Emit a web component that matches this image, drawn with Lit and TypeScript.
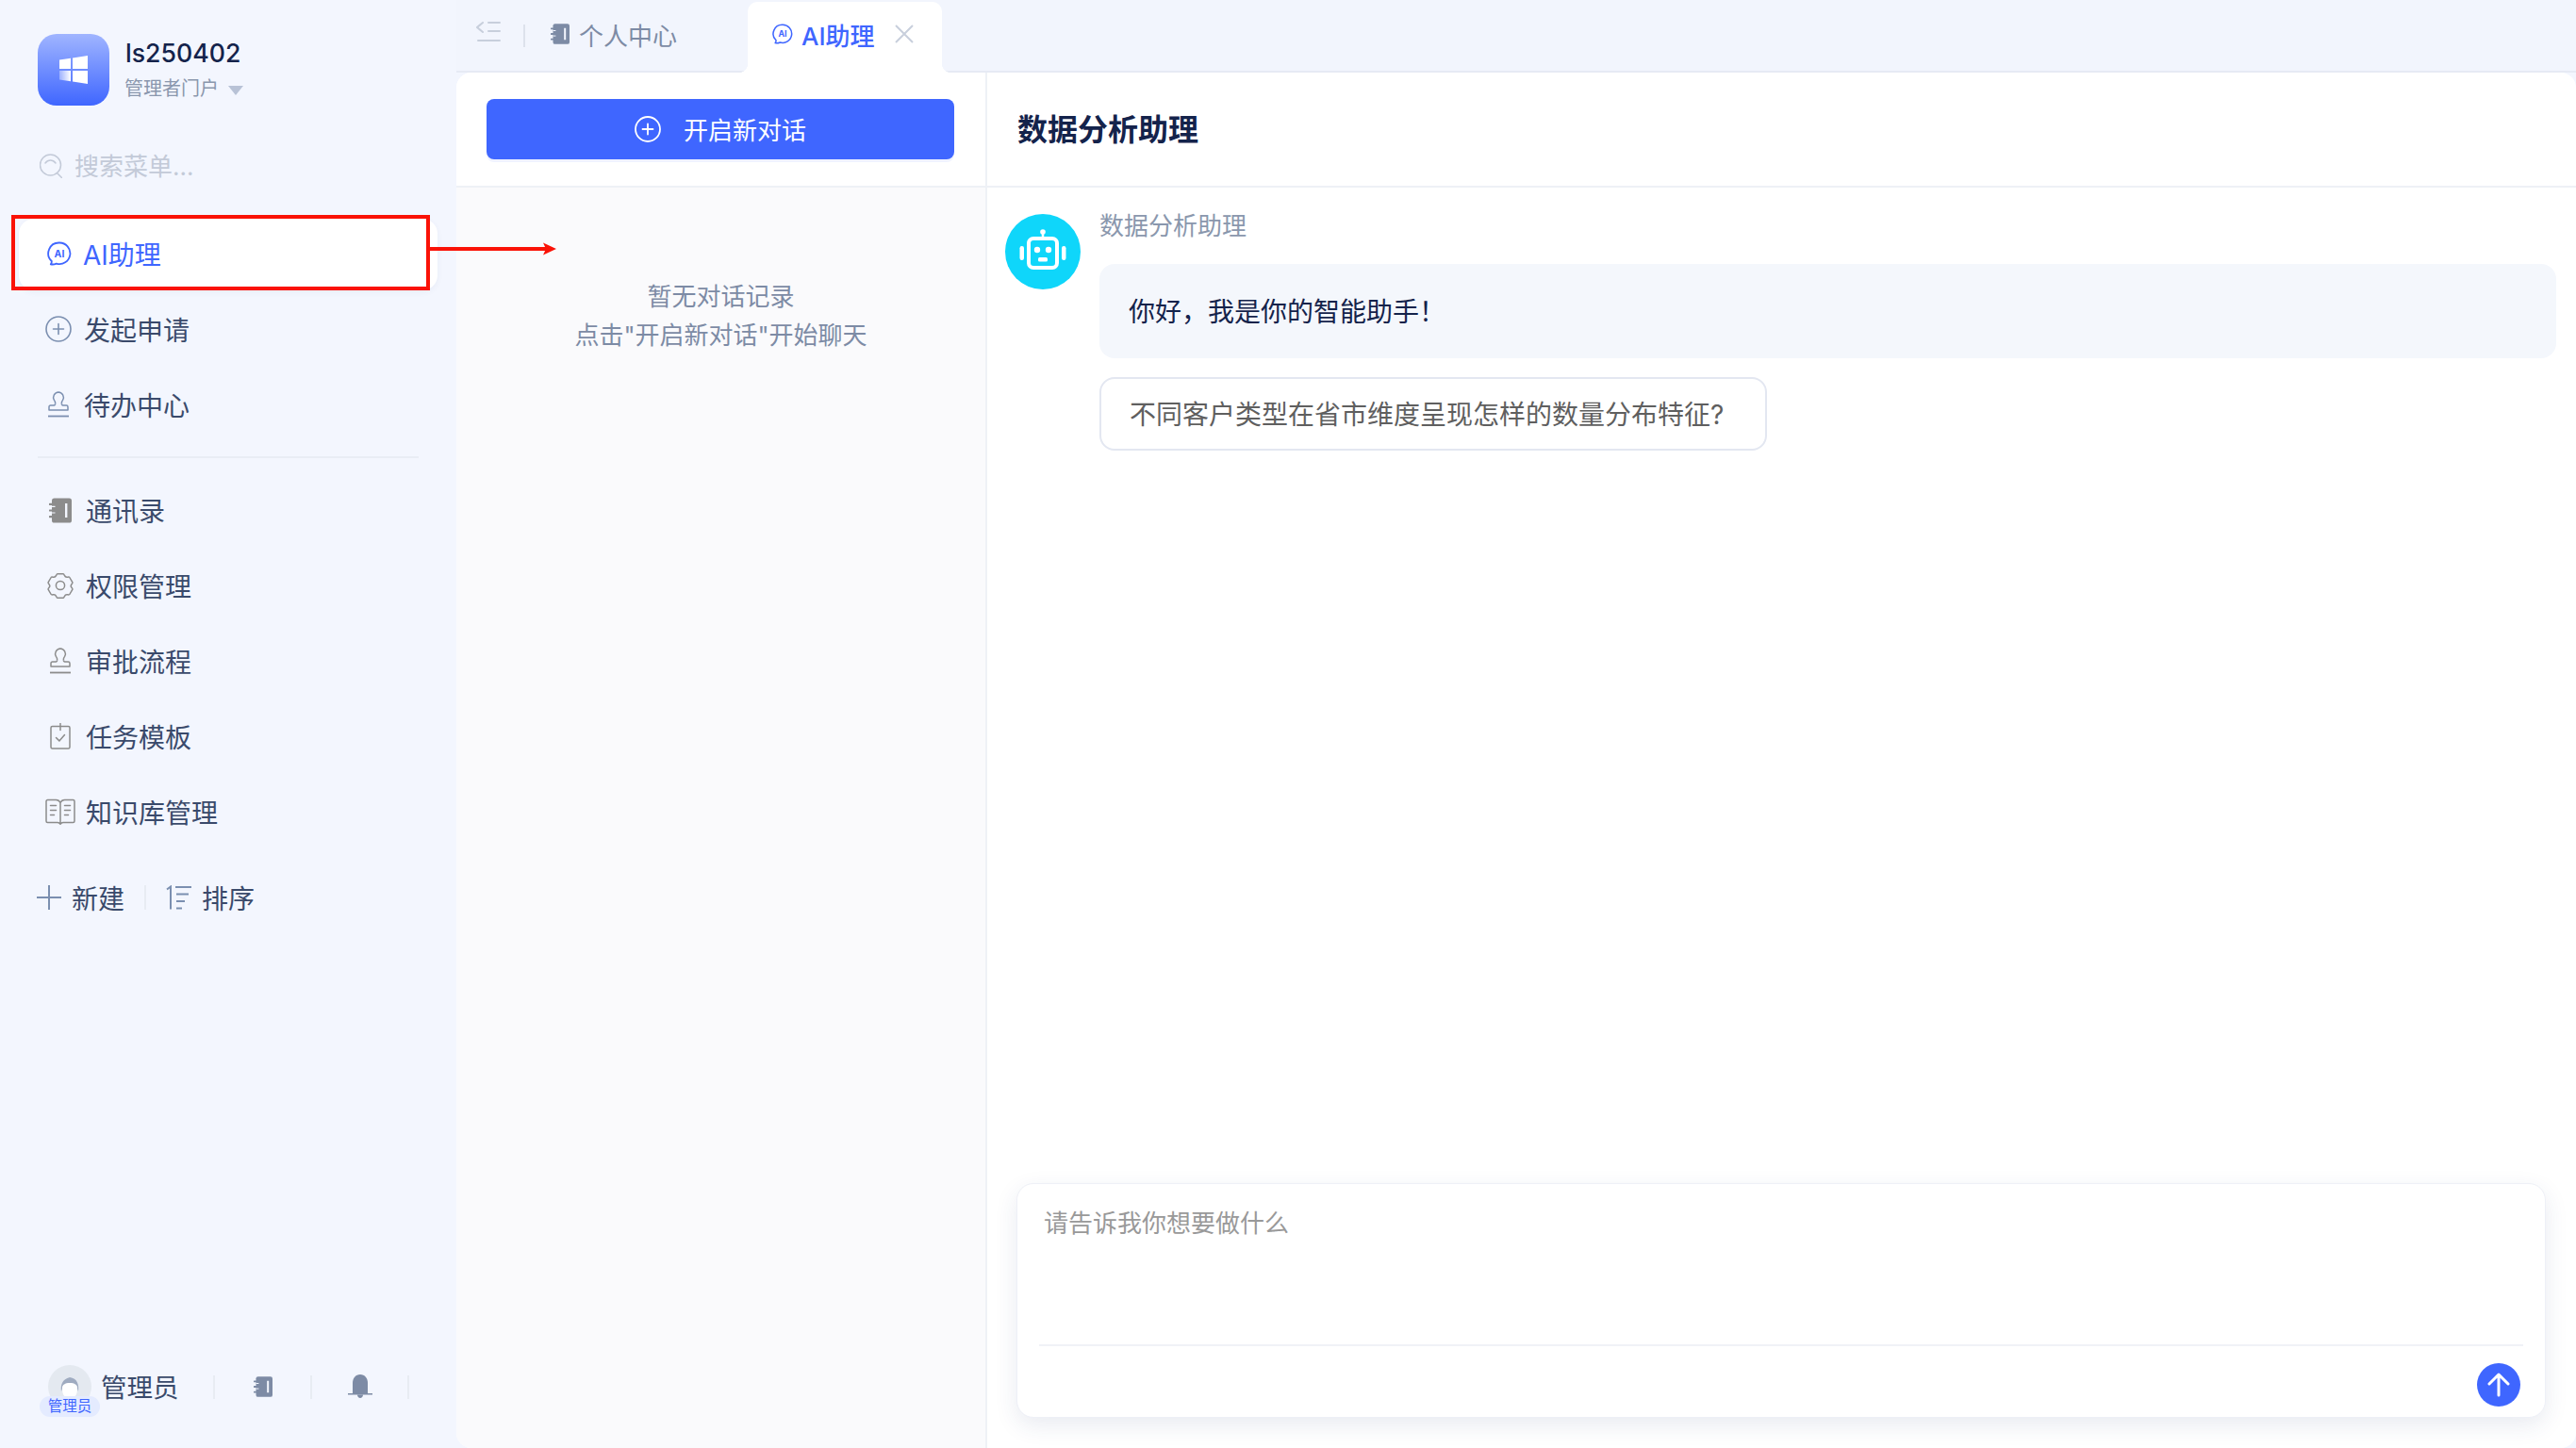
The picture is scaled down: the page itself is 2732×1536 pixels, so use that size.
import { LitElement, html, css } from "lit";
import { customElement } from "lit/decorators.js";

const aiIcon = (size: number) => html`<svg width=${size} height=${size} viewBox="0 0 26 26" fill="none">
  <path d="M13 1.5a11.3 11.3 0 1 1-3.2 22.1c-1.4.6-4.3 1.1-6 .7.7-1 1.1-2.2 1-3.3A11.3 11.3 0 0 1 13 1.5Z" stroke="#3f66ff" stroke-width="1.8" stroke-linejoin="round"/>
  <text x="13" y="16.8" text-anchor="middle" font-size="10.5" font-weight="700" fill="#3f66ff" font-family="Inter, sans-serif">AI</text>
</svg>`;

const plusCircle = (size: number, color: string, sw = 1.6) => html`<svg width=${size} height=${size} viewBox="0 0 28 28" fill="none" stroke=${color} stroke-width=${sw}>
  <circle cx="14" cy="14" r="13"/><path d="M14 8.5v11M8.5 14h11" stroke-linecap="round"/>
</svg>`;

const stamp = (color: string) => html`<svg width="24" height="28" viewBox="0 0 24 28" fill="none" stroke=${color} stroke-width="1.5" stroke-linejoin="round">
  <path d="M8.6 13.5V12c0-1-.6-1.8-1.2-2.6A5.6 5.6 0 0 1 12 1a5.6 5.6 0 0 1 4.6 8.4c-.6.8-1.2 1.6-1.2 2.6v1.5"/>
  <path d="M8.6 13.5c0 1.2-1 1.6-2.6 1.6H3.6c-1 0-1.6.7-1.6 1.6v3.4h20v-3.4c0-.9-.6-1.6-1.6-1.6H18c-1.6 0-2.6-.4-2.6-1.6"/>
  <path d="M1 26.5h22" stroke-width="1.8"/>
</svg>`;

const bookFilled = (w: number, h: number, color: string) => html`<svg width=${w} height=${h} viewBox="0 0 24 27" fill="none">
  <rect x="3" y="0.5" width="21" height="26" rx="2.6" fill=${color}/>
  <path d="M0.8 6.8h5M0.8 13.5h5M0.8 20.2h5" stroke=${color} stroke-width="2.2" stroke-linecap="round"/>
  <path d="M3 9.3h3.500M3 16h3.500" stroke="#f3f6fe" stroke-width="1.200"/>
  <rect x="17" y="6" width="2.4" height="15" fill="#f3f6fe"/>
</svg>`;

const gear = html`<svg width="28" height="28" viewBox="0 0 28 28" fill="none" stroke="#8c8c8c" stroke-width="1.5" stroke-linejoin="round">
  <path d="M11 1.700 17 1.700c.8 0 1 .7 1.400 1.700.5 1.200 1.900 2 3.200 1.800 1.100-.2 1.800-.4 2.200.3l3 5.200c.4.700-.1 1.200-.8 2-.9 1-.9 2.600 0 3.600.7.800 1.200 1.300.8 2l-3 5.200c-.4.700-1.100.500-2.200.3-1.300-.2-2.700.6-3.200 1.800-.4 1-.6 1.700-1.400 1.700h-6c-.8 0-1-.7-1.400-1.700-.5-1.200-1.900-2-3.200-1.800-1.100.2-1.800.4-2.200-.3l-3-5.200c-.4-.7.1-1.200.8-2 .9-1 .9-2.600 0-3.600-.7-.8-1.200-1.300-.8-2l3-5.200c.4-.7 1.100-.5 2.200-.3 1.300.2 2.700-.6 3.200-1.800.4-1 .6-1.700 1.400-1.700Z"/>
  <circle cx="14" cy="14" r="4.600"/>
</svg>`;

const clipboard = html`<svg width="22" height="28" viewBox="0 0 22 28" fill="none" stroke="#8c8c8c" stroke-width="1.5" stroke-linejoin="round">
  <rect x="1" y="3.500" width="20" height="23.500" rx="1.500"/>
  <path d="M11 0.500v7" stroke-linecap="round"/>
  <path d="M6.500 15.500l3.400 3.400 5.600-6.400" stroke-linecap="round"/>
</svg>`;

const openBook = html`<svg width="32" height="28" viewBox="0 0 32 28" fill="none" stroke="#8c8c8c" stroke-width="1.500" stroke-linejoin="round">
  <path d="M16 4.500C15 2.500 13.500 1.500 11.500 1.500H2.500C1.600 1.500 1 2.100 1 3v21c0 .9.6 1.500 1.500 1.500h10.500c1 0 1.600.3 2 .8l1 1 1-1c.4-.5 1-.8 2-.8H29.500c.9 0 1.500-.6 1.500-1.500V3c0-.9-.6-1.500-1.500-1.500H20.500C18.500 1.500 17 2.500 16 4.500Zm0 0v22"/>
  <path d="M5.500 7.500h6M5.500 12.500h6M5.500 17.500h4M20.500 7.500h6M20.500 12.500h6M20.500 17.500h4" stroke-linecap="round"/>
</svg>`;

const menu = [
  { label: "发起申请", icon: plusCircle(28, "#7b8fb0") },
  { label: "待办中心", icon: stamp("#7b8fb0") },
];
const menu2 = [
  { label: "通讯录", icon: bookFilled(24, 27, "#8c8c8c") },
  { label: "权限管理", icon: gear },
  { label: "审批流程", icon: stamp("#8c8c8c") },
  { label: "任务模板", icon: clipboard },
  { label: "知识库管理", icon: openBook },
];

@customElement("app-root")
export class AppRoot extends LitElement {
  static styles = css`
    :host {
      display: block;
      position: relative;
      height: 100vh;
      min-height: 1536px;
      font-family: Inter, "Noto Sans CJK SC", sans-serif;
      background: #f3f6fe;
      overflow: hidden;
      color: #3a4a6b;
    }
    .app { display: flex; height: 100%; }
    .side { width: 484px; flex: none; display: flex; flex-direction: column; height: 1536px; }
    .brand { display: flex; padding: 36px 0 0 40px; gap: 17px; height: 76px; }
    .logo { width: 76px; height: 76px; border-radius: 20px; background: linear-gradient(180deg, #a0b5ff 0%, #3f66ff 100%); display: flex; align-items: center; justify-content: center; }
    .brand-text { display: flex; flex-direction: column; }
    .org { font-size: 26.700px; font-weight: 500; color: #14234b; line-height: 34px; margin-top: 3px; }
    .role { display: flex; align-items: center; font-size: 20px; color: #8a97ad; line-height: 28px; margin-top: 7px; gap: 10px; margin-left: -1px; }
    .caret { width: 0; height: 0; border-left: 8.500px solid transparent; border-right: 8.500px solid transparent; border-top: 10px solid #b8c2d6; margin-top: 3px; }
    .search { display: flex; align-items: center; gap: 13px; height: 40px; margin: 44px 0 0 42px; font-size: 26px; color: #c3cad8; }
    .search-text { padding-bottom: 3px; }
    .item { display: flex; align-items: center; height: 80px; box-sizing: border-box; font-size: 28px; color: #3a4a6b; padding: 0 0 2px 44px; }
    .icon { width: 40px; display: flex; justify-content: center; margin-right: 7px; flex: none; }
    .item.active { height: 76px; margin: 36px 20px 2px; padding-left: 30px; background: #fff; border-radius: 16px; color: #3f66ff; box-shadow: 0 2px 6px rgba(60, 80, 140, 0.06); }
    .item.active .icon { width: 26px; margin-right: 12px; }
    .item.lead { padding-left: 42px; }
    .divider { height: 2px; background: #e9edf5; margin: 14px 40px 16px; }
    .tools { display: flex; align-items: center; height: 40px; margin: 30px 0 0 39px; font-size: 28px; }
    .tool { display: flex; align-items: center; gap: 11px; padding-bottom: 1px; }
    .tool.sort { gap: 10px; }
    .tool-sep { width: 2px; height: 26px; background: #e8ecf3; margin: 0 21px; }
    .foot { margin-top: auto; margin-bottom: 40px; display: flex; align-items: center; height: 50px; }
    .me { position: relative; width: 64px; height: 50px; margin-left: 42px; display: flex; justify-content: center; }
    .avatar { width: 46px; height: 46px; border-radius: 50%; background: #e4e9f0; overflow: hidden; margin-top: 2px; }
    .badge { position: absolute; left: 0; top: 35px; width: 64px; height: 22px; border-radius: 11px; background: #e4ebff; color: #3f66ff; font-size: 15.500px; line-height: 22px; text-align: center; }
    .me-name { font-size: 27.500px; color: #3a4a6b; margin-left: 1px; width: 119px; padding-bottom: 2px; }
    .foot-sep { width: 2px; height: 25px; background: #e8ecf3; flex: none; }
    .foot-btn { width: 101px; display: flex; justify-content: center; }

    .main { flex: 1; min-width: 0; display: flex; flex-direction: column; }
    .tabs { height: 75px; display: flex; align-items: flex-start; position: relative; border-bottom: 2px solid #e6eaf4; flex: none; background: #f2f5fd; }
    .collapse { margin: 22px 0 0 21px; display: flex; }
    .tab-sep { width: 2px; height: 24px; background: #dde2ec; margin: 26px 0 0 24px; }
    .tab { display: flex; align-items: center; gap: 10px; height: 68px; margin: 2px 0 0 27px; width: 210px; font-size: 26px; color: #7d8ba5; }
    .tab.on { width: 206px; height: 75px; margin-left: -1px; background: #fff; border-radius: 10px 10px 0 0; color: #3f66ff; font-weight: 500; padding-left: 26px; box-sizing: border-box; position: relative; gap: 9px; z-index: 1; padding-bottom: 7px; }
    .tab.on::before, .tab.on::after { content: ""; position: absolute; bottom: 0; width: 10px; height: 10px; }
    .tab.on::before { left: -10px; background: radial-gradient(circle at 0 0, transparent 10px, #fff 10.500px); }
    .tab.on::after { right: -10px; background: radial-gradient(circle at 100% 0, transparent 10px, #fff 10.500px); }
    .x { margin-left: 12px; display: flex; }

    .panel { flex: 1; min-height: 0; display: flex; background: #fff; border-radius: 16px; overflow: hidden; }
    .left { width: 563px; box-sizing: border-box; flex: none; border-right: 2px solid #eef1f6; display: flex; flex-direction: column; background: #fafafc; }
    .left-head { box-sizing: border-box; background: #fff; border-bottom: 2px solid #eef1f6; height: 122px; padding: 28px 33px 0 32px; }
    .new { height: 64px; border-radius: 8px; background: #3f66ff; color: #fff; font-size: 26px; display: flex; align-items: center; justify-content: center; gap: 24px; box-shadow: 0 3px 0 rgba(63, 102, 255, 0.08); }
    .new-text { padding-bottom: 1px; }
    .empty { padding-top: 95px; text-align: center; font-size: 26px; line-height: 41px; color: #7d8ba5; }
    .right { flex: 1; min-width: 0; display: flex; flex-direction: column; }
    .right-head { height: 122px; box-sizing: border-box; border-bottom: 2px solid #eef1f6; padding: 0 0 4px 32px; display: flex; align-items: center; font-size: 32px; font-weight: 600; color: #14234b; flex: none; }
    .chat { flex: 1; min-height: 0; display: flex; gap: 20px; padding: 28px 21px 0 19px; }
    .bot { width: 80px; height: 80px; border-radius: 50%; background: #0fd6fa; display: flex; align-items: center; justify-content: center; flex: none; }
    .msg { flex: 1; min-width: 0; }
    .sender { font-size: 26px; line-height: 22px; color: #8a97ad; padding-top: 2px; margin-bottom: 29px; }
    .bubble { height: 100px; box-sizing: border-box; background: #f4f7fc; border-radius: 16px; padding: 0 31px 3px; display: flex; align-items: center; font-size: 28px; color: #14234b; }
    .suggest { margin-top: 20px; width: 708px; height: 78px; box-sizing: border-box; border: 2px solid #e3e7f1; border-radius: 16px; padding: 0 30px 3px; display: flex; align-items: center; font-size: 28px; color: #5f5f5f; white-space: nowrap; }
    .composer { margin: 0 32px 32px 31px; height: 249px; box-sizing: border-box; border: 1px solid #eef0f7; border-radius: 18px; background: #fff; box-shadow: 0 8px 24px rgba(40, 60, 120, 0.1); display: flex; flex-direction: column; flex: none; }
    .input { height: 170px; box-sizing: border-box; border: 0; outline: 0; resize: none; background: transparent; padding: 24px 28px 0; font: 26px/36px Inter, "Noto Sans CJK SC", sans-serif; flex: none; }
    .input::placeholder { color: #999; opacity: 1; }
    .composer-line { height: 2px; background: #f0f2f7; margin: 0 23px; flex: none; }
    .composer-foot { display: flex; justify-content: flex-end; padding: 18px 26px 0 0; }
    .send { width: 46px; height: 46px; border-radius: 50%; background: #3f66ff; display: flex; align-items: center; justify-content: center; }

    .mark { position: absolute; left: 12px; top: 228px; width: 444px; height: 80px; box-sizing: border-box; border: 4px solid #fa1207; pointer-events: none; }
    .arrow { position: absolute; left: 456px; top: 254px; pointer-events: none; }
  `;

  render() {
    return html`
      <div class="app">
        <aside class="side">
          <div class="brand">
            <div class="logo">
              <svg width="32" height="32" viewBox="0 0 32 32">
                <defs><linearGradient id="w" x1="0" y1="0" x2="1" y2="0"><stop offset="0" stop-color="#fff" stop-opacity=".35"/><stop offset="1" stop-color="#fff"/></linearGradient></defs>
                <path d="M1 5.500l12-1.700v11.200H1Z" fill="#fff"/>
                <path d="M15 3.500 31 1v14H15Z" fill="#fff"/>
                <path d="M1 17h12v11.200L1 26.500Z" fill="url(#w)"/>
                <path d="M15 17h16v14l-16-2.500Z" fill="#fff"/>
              </svg>
            </div>
            <div class="brand-text">
              <div class="org">ls250402</div>
              <div class="role">管理者门户<span class="caret"></span></div>
            </div>
          </div>
          <div class="search">
            <svg width="24" height="26" viewBox="0 0 24 26" fill="none" stroke="#c3cad8" stroke-width="1.500"><circle cx="11.500" cy="12" r="11"/><path d="M18.500 20.500l5 5" stroke-linecap="round"/><path d="M6 10c1.500-2 3.500-3 5.500-3s4 1 5.500 3" stroke-linecap="round"/></svg>
            <span class="search-text">搜索菜单...</span>
          </div>
          <div class="item active"><span class="icon">${aiIcon(26)}</span>AI助理</div>
          ${menu.map((m) => html`<div class="item lead"><span class="icon">${m.icon}</span>${m.label}</div>`)}
          <div class="divider"></div>
          ${menu2.map((m) => html`<div class="item"><span class="icon">${m.icon}</span><span>${m.label}</span></div>`)}
          <div class="tools">
            <div class="tool">
              <svg width="26" height="26" viewBox="0 0 26 26" stroke="#7b8fb0" stroke-width="2"><path d="M13 0v26M0 13h26"/></svg>
              新建
            </div>
            <span class="tool-sep"></span>
            <div class="tool sort">
              <svg width="28" height="26" viewBox="0 0 28 26" fill="none" stroke="#7b8fb0" stroke-width="2"><path d="M1 4.500 5 1.500v24"/><path d="M10 2h17M11 9.500h13M11 17h9M11 24.500h6"/></svg>
              排序
            </div>
          </div>
          <div class="foot">
            <div class="me">
              <div class="avatar">
                <svg width="46" height="46" viewBox="0 0 46 46"><path d="M14 28c-1-7 1-13 9-15 8 1 10 8 9 15l-2-6H16Z" fill="#9fabc0"/><path d="M15 24c0-3 3-5 8-5s8 2 8 5c0 6-1 11-8 11s-8-5-8-11Z" fill="#fff"/></svg>
              </div>
              <span class="badge">管理员</span>
            </div>
            <span class="me-name">管理员</span>
            <span class="foot-sep"></span>
            <span class="foot-btn">${bookFilled(20, 24, "#7d8ba5")}</span>
            <span class="foot-sep"></span>
            <span class="foot-btn">
              <svg width="26" height="26" viewBox="0 0 26 26" fill="#7d8ba5"><path d="M13 0c5 0 8 4 8 9v11H5V9c0-5 3-9 8-9Z"/><path d="M0 20h26v1.500H0Z"/><path d="M10 21.500h6c0 2-1.500 3.500-3 3.500s-3-1.500-3-3.500Z"/></svg>
            </span>
            <span class="foot-sep"></span>
          </div>
        </aside>
        <main class="main">
          <div class="tabs">
            <span class="collapse">
              <svg width="26" height="24" viewBox="0 0 26 24" fill="none" stroke="#c8cfdc" stroke-width="2" stroke-linecap="round"><path d="M7 2 1 7l6 5M13 2h12M13 11h12M2 21h23"/></svg>
            </span>
            <span class="tab-sep"></span>
            <div class="tab">${bookFilled(20, 24, "#7d8ba5")}个人中心</div>
            <div class="tab on">${aiIcon(22)}AI助理
              <span class="x"><svg width="20" height="20" viewBox="0 0 20 20" stroke="#c8cfdc" stroke-width="2"><path d="M1 1l18 18M19 1 1 19"/></svg></span>
            </div>
          </div>
          <div class="panel">
            <section class="left">
              <div class="left-head">
                <div class="new">${plusCircle(28, "#fff", 1.800)}<span class="new-text">开启新对话</span></div>
              </div>
              <div class="empty">暂无对话记录<br />点击"开启新对话"开始聊天</div>
            </section>
            <section class="right">
              <div class="right-head">数据分析助理</div>
              <div class="chat">
                <div class="bot">
                  <svg width="50" height="50" viewBox="0 0 50 50" fill="none">
                    <circle cx="25" cy="4" r="2.800" fill="#fff"/><path d="M25 6v5" stroke="#fff" stroke-width="2.500"/>
                    <rect x="10" y="11" width="30" height="31" rx="5" stroke="#fff" stroke-width="4"/>
                    <rect x="0.500" y="19" width="4.500" height="15" rx="2.200" fill="#fff"/><rect x="45" y="19" width="4.500" height="15" rx="2.200" fill="#fff"/>
                    <circle cx="19" cy="23" r="3.200" fill="#fff"/><circle cx="31" cy="23" r="3.200" fill="#fff"/>
                    <rect x="20" y="31" width="10" height="4.500" rx="1.500" fill="#fff"/>
                  </svg>
                </div>
                <div class="msg">
                  <div class="sender">数据分析助理</div>
                  <div class="bubble">你好，我是你的智能助手！</div>
                  <div class="suggest">不同客户类型在省市维度呈现怎样的数量分布特征?</div>
                </div>
              </div>
              <div class="composer">
                <textarea class="input" placeholder="请告诉我你想要做什么"></textarea>
                <div class="composer-line"></div>
                <div class="composer-foot">
                  <span class="send"><svg width="26" height="26" viewBox="0 0 26 26" fill="none" stroke="#fff" stroke-width="3" stroke-linecap="round" stroke-linejoin="round"><path d="M13 24V3M3 12 13 2l10 10"/></svg></span>
                </div>
              </div>
            </section>
          </div>
        </main>
      </div>
      <div class="mark"></div>
      <svg class="arrow" width="136" height="20" viewBox="0 0 136 20"><path d="M0 10h124" stroke="#fa1207" stroke-width="4"/><path d="M134 10l-14-6.500 3 6.500-3 6.500Z" fill="#fa1207"/></svg>
    `;
  }
}
